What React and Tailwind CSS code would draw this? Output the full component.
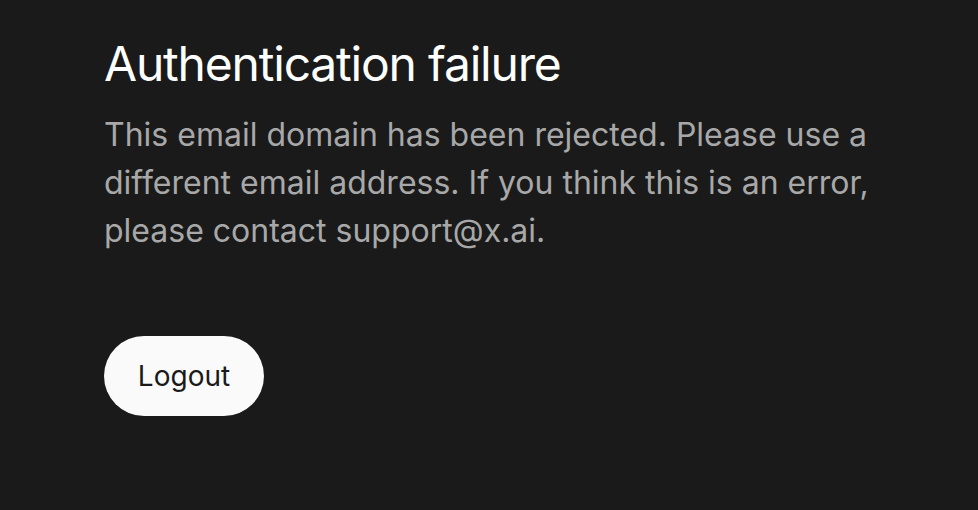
export default function App() {
  return (
    <div className="min-h-[510px] w-full bg-[#1a1a1a] font-['Inter',sans-serif]">
      <div className="pl-[104px] pt-[34px]">
        <h1 className="text-[48px] leading-[60px] font-normal text-white tracking-[-1.2px]">
          Authentication failure
        </h1>
        <p className="mt-[17px] max-w-[780px] text-[32px] leading-[48px] text-[#a8a8a8]">
          This email domain has been rejected. Please use a different email address. If you think this is an error, please contact support@x.ai.
        </p>
        <button className="mt-[81px] h-[80px] w-[160px] rounded-full bg-[#fafafa] text-[28px] text-[#1a1a1a]">
          Logout
        </button>
      </div>
    </div>
  );
}
